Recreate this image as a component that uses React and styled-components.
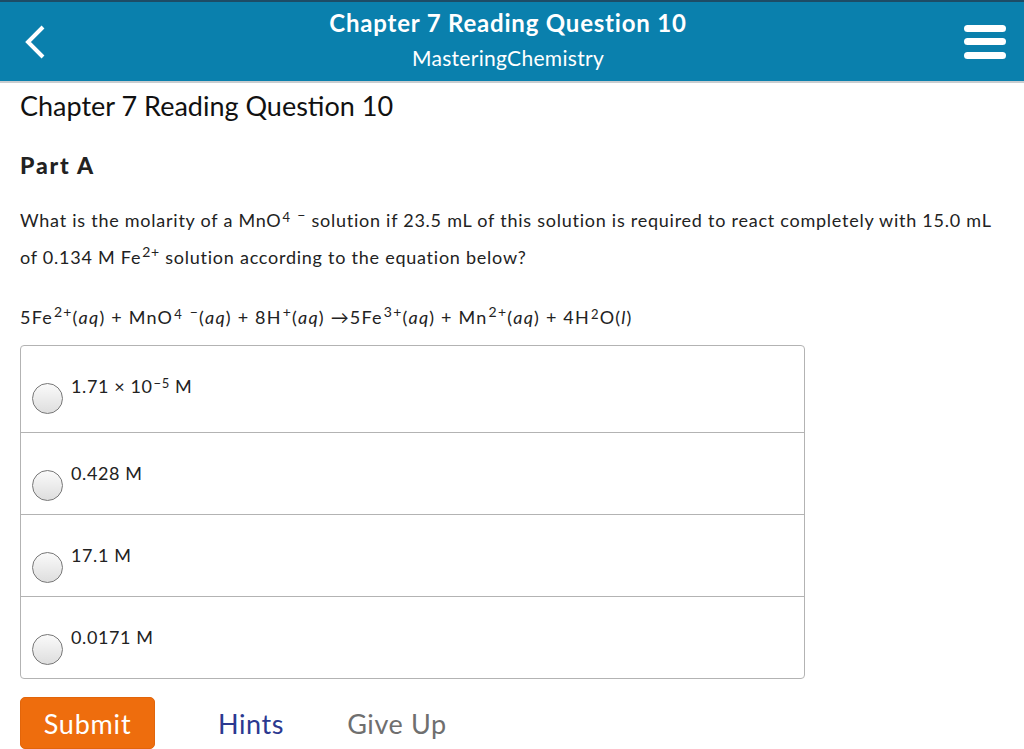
import React from 'react';
import styled, { createGlobalStyle } from 'styled-components';

const GlobalStyle = createGlobalStyle`
  html, body {
    margin: 0;
    padding: 0;
    background: #fff;
  }
  body {
    font-family: Lato, "Open Sans", sans-serif;
    color: #222;
  }
`;

const Header = styled.header`
  height: 79px;
  background: #0a80ad;
  border-top: 2px solid #1d4c66;
  border-bottom: 2px solid #c9cdd0;
  display: flex;
  align-items: center;
  justify-content: space-between;
  padding: 0 18px 0 24px;
`;

const HeaderTitles = styled.div`
  display: flex;
  flex-direction: column;
  align-items: center;
  gap: 10px;
  color: #fff;
  margin-left: 6px;
  padding-bottom: 4px;
`;

const HeaderTitle = styled.div`
  font-size: 24px;
  font-weight: 700;
  letter-spacing: 0.8px;
  line-height: 26px;
`;

const HeaderSub = styled.div`
  font-size: 21px;
  line-height: 24px;
  letter-spacing: 0.3px;
`;

const IconButton = styled.div`
  display: flex;
  align-items: center;
`;

const Main = styled.main`
  display: flex;
  flex-direction: column;
  align-items: flex-start;
  padding: 8px 20px 0 20px;
`;

const PageTitle = styled.h1`
  margin: 0;
  font-size: 27px;
  font-weight: 400;
  line-height: 30px;
  color: #111;
`;

const PartTitle = styled.h2`
  margin: 32px 0 0 0;
  font-size: 23px;
  font-weight: 900;
  letter-spacing: 1.8px;
  line-height: 24px;
  color: #222;
`;

const BodyText = styled.p`
  font-size: 18px;
  letter-spacing: 0.75px;
  color: #222;
`;

const Question = styled(BodyText)`
  margin: 25px 0 0 0;
  line-height: 37px;
`;

const Equation = styled(BodyText)`
  margin: 26px 0 0 0;
  line-height: 30px;
  letter-spacing: 1.2px;
`;

const Sup = styled.sup`
  font-size: ${({ $small }) => ($small ? 13 : 14)}px;
  line-height: 0;
  vertical-align: ${({ $small }) => ($small ? 5 : 7)}px;
  margin-left: 1px;
`;

const AnswerBox = styled.div`
  margin-top: 13px;
  width: 783px;
  border: 1px solid #b3b3b3;
  border-radius: 4px;
  display: flex;
  flex-direction: column;
`;

const AnswerRow = styled.label`
  display: flex;
  align-items: flex-start;
  gap: 8px;
  height: ${({ $tall }) => ($tall ? 86 : 82)}px;
  border-top: 1px solid #b3b3b3;
  padding: 28px 0 0 11px;
  box-sizing: border-box;
  cursor: pointer;

  &:first-child {
    border-top: none;
  }
`;

const Radio = styled.span`
  width: 29px;
  height: 29px;
  margin-top: 9px;
  border-radius: 50%;
  border: 1px solid #777;
  background: linear-gradient(#fafafa, #dedede);
  flex-shrink: 0;
`;

const AnswerText = styled.span`
  font-size: 18px;
  letter-spacing: 0.6px;
  line-height: 24px;
  color: #222;
`;

const Actions = styled.div`
  display: flex;
  align-items: center;
  gap: 63px;
  margin-top: 18px;
`;

const SubmitButton = styled.button`
  background: #ee6d0d;
  color: #fff;
  border: 1px solid #e2650a;
  border-radius: 5px;
  font-family: inherit;
  font-size: 27px;
  letter-spacing: 0.8px;
  width: 135px;
  height: 52px;
  padding: 0;
  cursor: pointer;
`;

const LinkButton = styled.span`
  font-size: 27px;
  letter-spacing: 0.6px;
  color: ${({ $color }) => $color};
`;

const answers = [
  { label: <>1.71 × 10<Sup $small>−5</Sup> M</>, tall: true },
  { label: '0.428 M' },
  { label: '17.1 M' },
  { label: '0.0171 M' },
];

const App = () => {
  return (
    <>
      <GlobalStyle />
      <Header>
        <IconButton>
          <svg width="22" height="34" viewBox="0 0 22 34">
            <path d="M19 2 L4 17 L19 32" fill="none" stroke="#fff" strokeWidth="4" strokeLinejoin="miter" />
          </svg>
        </IconButton>
        <HeaderTitles>
          <HeaderTitle>Chapter 7 Reading Question 10</HeaderTitle>
          <HeaderSub>MasteringChemistry</HeaderSub>
        </HeaderTitles>
        <IconButton>
          <svg width="42" height="36" viewBox="0 0 42 36">
            <rect x="0" y="1" width="42" height="7" rx="3.5" fill="#fff" />
            <rect x="0" y="14" width="42" height="7" rx="3.5" fill="#fff" />
            <rect x="0" y="28" width="42" height="7" rx="3.5" fill="#fff" />
          </svg>
        </IconButton>
      </Header>
      <Main>
        <PageTitle>Chapter 7 Reading Question 10</PageTitle>
        <PartTitle>Part A</PartTitle>
        <Question>
          What is the molarity of a MnO<Sup $small>4</Sup> <Sup>−</Sup> solution if 23.5 mL of this solution is required to react completely with 15.0 mL
          <br />
          of 0.134 M Fe<Sup>2+</Sup> solution according to the equation below?
        </Question>
        <Equation>
          5Fe<Sup>2+</Sup>(<i>aq</i>) + MnO<Sup $small>4</Sup> <Sup>−</Sup>(<i>aq</i>) + 8H<Sup>+</Sup>(<i>aq</i>) →5Fe<Sup>3+</Sup>(<i>aq</i>) + Mn<Sup>2+</Sup>(<i>aq</i>) + 4H<Sup $small>2</Sup>O(<i>l</i>)
        </Equation>
        <AnswerBox>
          {answers.map((a, i) => (
            <AnswerRow key={i} $tall={a.tall}>
              <Radio />
              <AnswerText>{a.label}</AnswerText>
            </AnswerRow>
          ))}
        </AnswerBox>
        <Actions>
          <SubmitButton>Submit</SubmitButton>
          <LinkButton $color="#2b3990">Hints</LinkButton>
          <LinkButton $color="#6f6f6f">Give Up</LinkButton>
        </Actions>
      </Main>
    </>
  );
};

export default App;
